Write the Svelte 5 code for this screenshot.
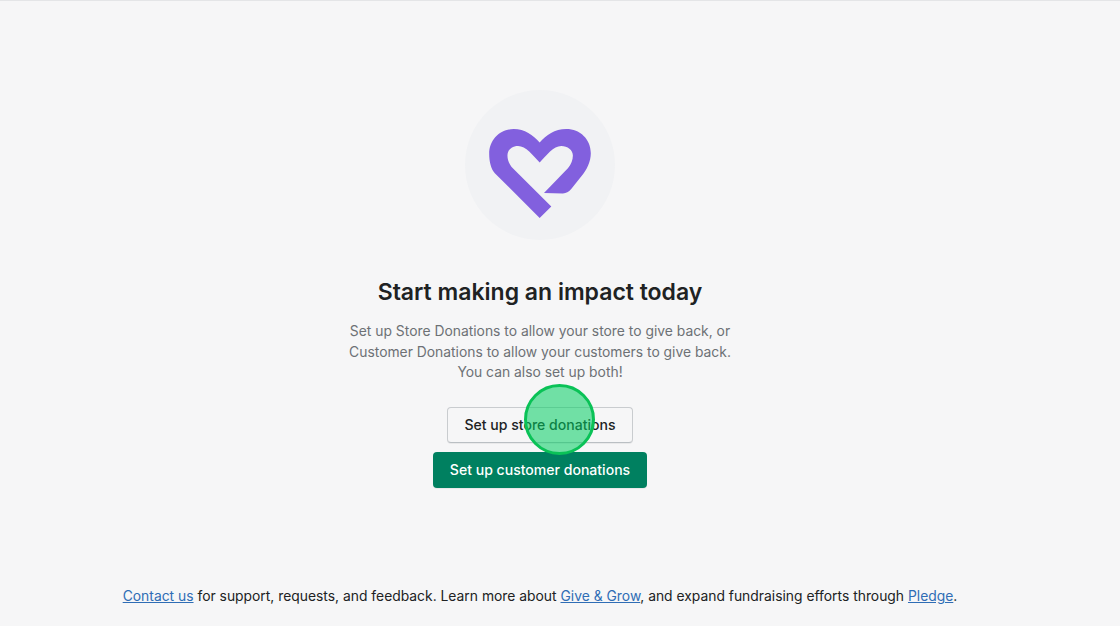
<script lang="ts">
  const title = "Start making an impact today";
</script>

<div class="page">
  <main class="empty-state">
    <div class="badge">
      <svg class="heart" viewBox="118 147 306 268" aria-hidden="true">
        <path
          d="M270 415 L135 280 C124 268 118 245 118 222 C118 178 152 147 192 147 C225 147 250 165 270 188 C290 165 315 147 350 147 C392 147 424 178 424 220 C424 245 412 270 395 290 L365 328 C357 337 350 341 340 341 L283 340 L355 265 C365 254 370 240 370 227 C370 210 354 198 335 198 C312 198 290 226 270 248 C250 226 228 198 205 198 C186 198 173 210 173 227 C173 242 180 257 190 266 L305 380 Z"
        />
      </svg>
    </div>
    <h1>{title}</h1>
    <p>
      Set up Store Donations to allow your store to give back, or<br />
      Customer Donations to allow your customers to give back.<br />
      You can also set up both!
    </p>
    <div class="actions">
      <button class="btn">Set up store donations</button>
      <button class="btn primary">Set up customer donations</button>
      <span class="touch"></span>
    </div>
  </main>
  <footer>
    <a href="#contact">Contact us</a> for support, requests, and feedback. Learn more about
    <a href="#grow">Give &amp; Grow</a>, and expand fundraising efforts through
    <a href="#pledge">Pledge</a>.
  </footer>
</div>

<style>
  :global(body) {
    margin: 0;
    background: #f6f6f7;
  }

  .page {
    height: 626px;
    box-sizing: border-box;
    border-top: 1px solid #e4e5e7;
    padding-right: 40px;
    display: flex;
    flex-direction: column;
    align-items: center;
    font-family: Inter, "Noto Sans", sans-serif;
    color: #202223;
    overflow: hidden;
  }

  .empty-state {
    display: flex;
    flex-direction: column;
    align-items: center;
    padding-top: 89px;
  }

  .badge {
    width: 150px;
    height: 150px;
    box-sizing: border-box;
    padding-top: 39px;
    border-radius: 50%;
    background: #f1f2f4;
    display: flex;
    justify-content: center;
    align-items: flex-start;
  }

  .heart {
    width: 102px;
    height: 89px;
    fill: #8260de;
  }

  h1 {
    margin: 36px 0 0;
    font-size: 23px;
    line-height: 32px;
    font-weight: 600;
  }

  p {
    margin: 13px 0 0;
    font-size: 13.87px;
    line-height: 20.5px;
    color: #6d7175;
    text-align: center;
  }

  .actions {
    position: relative;
    margin-top: 24px;
    display: flex;
    flex-direction: column;
    align-items: center;
    gap: 9px;
  }

  .btn {
    height: 36px;
    padding: 0 16.5px;
    border: 1px solid #c9cccf;
    border-bottom-color: #babfc3;
    border-radius: 4px;
    background: #f6f6f7;
    color: #202223;
    font: 500 14.05px/20px Inter, "Noto Sans", sans-serif;
    box-shadow: 0 1px 0 rgba(0, 0, 0, 0.05);
  }

  .btn.primary {
    border: 0;
    background: #008060;
    color: #fff;
  }

  .touch {
    position: absolute;
    left: 91px;
    top: -23px;
    width: 71px;
    height: 71px;
    box-sizing: border-box;
    border: 3px solid #0ac257;
    border-radius: 50%;
    background: rgba(2, 206, 98, 0.55);
  }

  footer {
    margin-top: auto;
    padding-bottom: 20px;
    font-size: 13.87px;
    line-height: 20px;
    white-space: nowrap;
  }

  a {
    color: #2f6db5;
    text-decoration: underline;
  }
</style>
